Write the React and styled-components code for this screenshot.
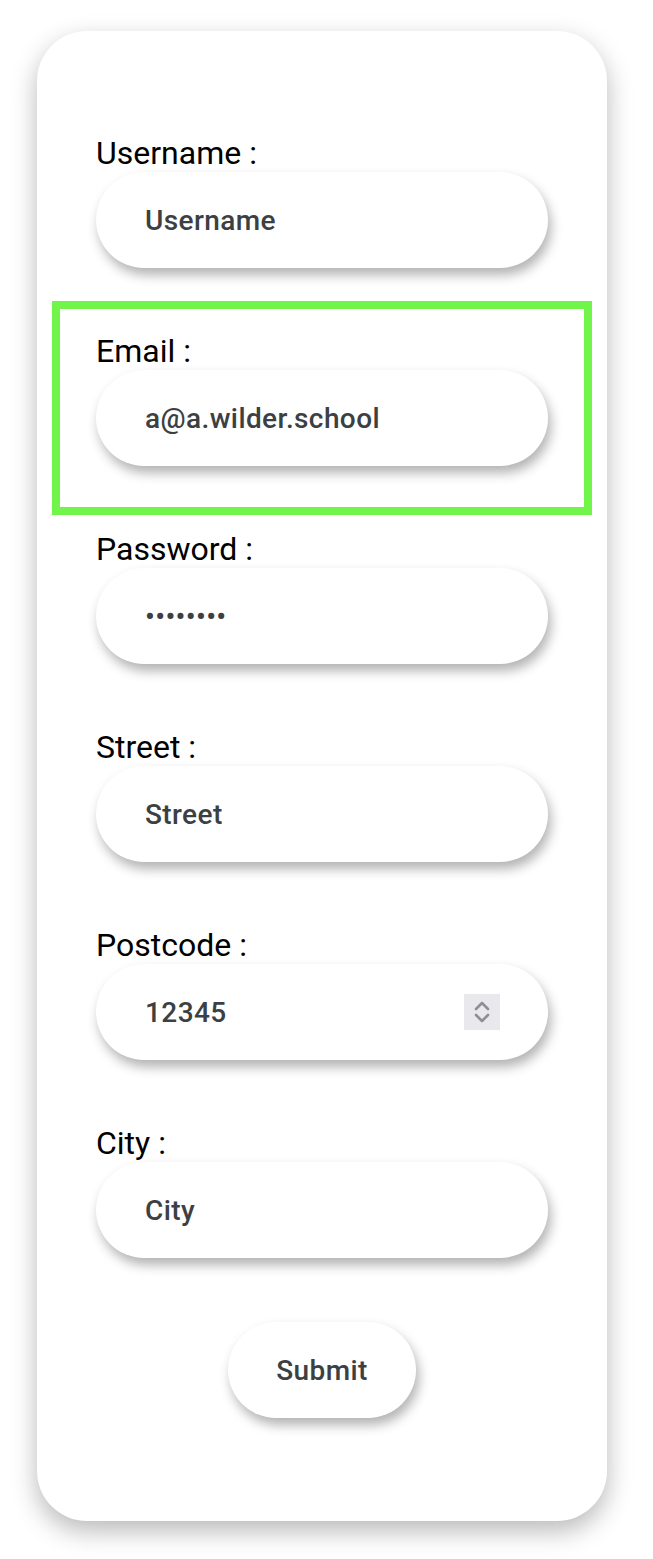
import React from "react";
import styled, { createGlobalStyle } from "styled-components";

const GlobalStyle = createGlobalStyle`
  body {
    margin: 0;
    background: #ffffff;
    font-family: Roboto, "Liberation Sans", sans-serif;
  }
`;

const fields = [
  { name: "username", label: "Username :", type: "text", placeholder: "Username" },
  { name: "email", label: "Email :", type: "email", value: "a@a.wilder.school", highlight: true },
  { name: "password", label: "Password :", type: "password", value: "12345678" },
  { name: "street", label: "Street :", type: "text", placeholder: "Street" },
  { name: "postcode", label: "Postcode :", type: "text", value: "12345", spinner: true },
  { name: "city", label: "City :", type: "text", placeholder: "City" },
];

const App = () => {
  return (
    <>
      <GlobalStyle />
      <Page>
        <Card>
          {fields.map((f) => (
            <Group key={f.name} highlight={f.highlight}>
              <Label htmlFor={f.name}>{f.label}</Label>
              <InputBox>
                <Input
                  id={f.name}
                  type={f.type}
                  placeholder={f.placeholder}
                  value={f.value}
                  readOnly
                />
                {f.spinner && (
                  <Spinner>
                    <svg width="20" height="28" viewBox="0 0 20 28">
                      <path
                        d="M4 11 L10 5 L16 11"
                        fill="none"
                        stroke="#8e8e96"
                        strokeWidth="2.6"
                        strokeLinecap="round"
                        strokeLinejoin="round"
                      />
                      <path
                        d="M4 17 L10 23 L16 17"
                        fill="none"
                        stroke="#8e8e96"
                        strokeWidth="2.6"
                        strokeLinecap="round"
                        strokeLinejoin="round"
                      />
                    </svg>
                  </Spinner>
                )}
              </InputBox>
            </Group>
          ))}
          <SubmitButton type="button">Submit</SubmitButton>
        </Card>
      </Page>
    </>
  );
};

export default App;

const Page = styled.div`
  padding: 31px 46px 38px 37px;
`;

const Card = styled.form`
  width: 570px;
  box-sizing: border-box;
  padding: 80px 23px 103px;
  background: #ffffff;
  border-radius: 50px;
  box-shadow: 0 10px 26px rgba(0, 0, 0, 0.28);
  display: flex;
  flex-direction: column;
  align-items: stretch;
`;

const Group = styled.div`
  height: 198px;
  box-sizing: border-box;
  padding: 23px 36px 41px;
  display: flex;
  flex-direction: column;
  outline: ${(p) => (p.highlight ? "8px solid #72f54a" : "none")};
`;

const Label = styled.label`
  font-size: 32px;
  line-height: 38px;
  color: #000000;
  font-weight: 400;
`;

const InputBox = styled.div`
  height: 96px;
  border-radius: 48px;
  background: #ffffff;
  box-shadow: 3px 7px 12px rgba(0, 0, 0, 0.3);
  display: flex;
  align-items: center;
  padding: 0 48px 0 49px;
`;

const Input = styled.input`
  flex: 1;
  min-width: 0;
  border: none;
  outline: none;
  background: transparent;
  padding: 0;
  font-family: Roboto, "Liberation Sans", sans-serif;
  font-size: 28px;
  font-weight: 500;
  letter-spacing: 0.4px;
  color: #3c4043;

  &::placeholder {
    color: #3c4043;
    opacity: 1;
  }
`;

const Spinner = styled.span`
  width: 36px;
  height: 36px;
  background: #e8e8ed;
  display: flex;
  align-items: center;
  justify-content: center;
`;

const SubmitButton = styled.button`
  margin: 23px auto 0;
  width: 188px;
  height: 96px;
  border: none;
  border-radius: 48px;
  background: #ffffff;
  box-shadow: 3px 7px 12px rgba(0, 0, 0, 0.3);
  font-family: Roboto, "Liberation Sans", sans-serif;
  font-size: 28px;
  font-weight: 500;
  letter-spacing: 0.4px;
  color: #3c4043;
  cursor: pointer;
`;
